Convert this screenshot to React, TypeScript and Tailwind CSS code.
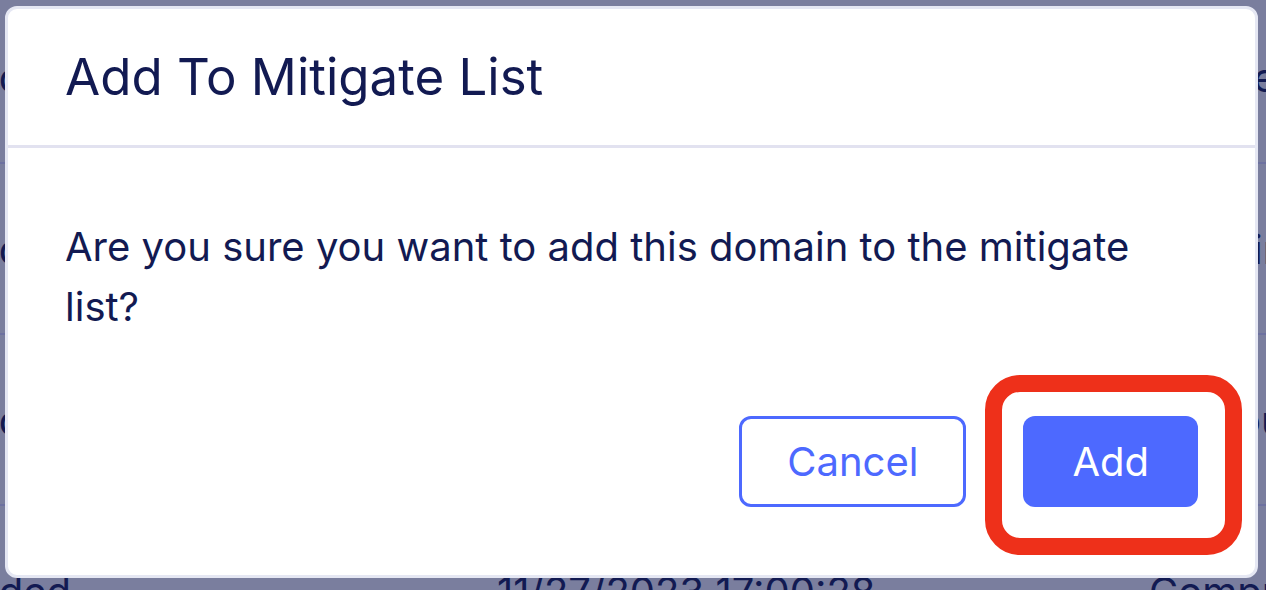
const rows = [
  { status: 'Added', date: '11/27/2023 17:00:28', type: 'e', pad: 'pl-[104px]' },
  { status: 'Added', date: '11/27/2023 17:00:28', type: 'in', pad: 'pl-[104px]' },
  { status: 'Added', date: '11/27/2023 17:00:28', type: 'ou', pad: 'pl-[88px]' },
  { status: 'Added', date: '11/27/2023 17:00:28', type: 'Compr', pad: 'pl-0' },
];

function DomainTable() {
  return (
    <table className="-mt-2 w-full table-fixed border-collapse text-[40px] whitespace-nowrap">
      <tbody>
        {rows.map((row, i) => (
          <tr key={i} className="h-[171px] border-b-2 border-[#6d71a0]">
            <td className="w-[497px] p-0 pt-0.5">
              <div className="flex w-[71px] justify-end">{row.status}</div>
            </td>
            <td className="p-0 pt-0.5">{row.date}</td>
            <td className="w-[117px] p-0 pt-0.5">
              <div className={row.pad}>{row.type}</div>
            </td>
          </tr>
        ))}
      </tbody>
    </table>
  );
}

export default function App() {
  return (
    <div className="relative h-screen overflow-hidden bg-[#7a7e9e] font-['Inter',sans-serif] text-[#121a52]">
      <DomainTable />
      <div className="absolute inset-0 flex items-start pt-1.5 pr-2 pl-[5px]">
        <div
          role="dialog"
          aria-modal="true"
          aria-labelledby="dialog-title"
          className="w-full rounded-xl border-[3px] border-[#e5e7f3] bg-white"
        >
          <header className="border-b-[3px] border-[#e2e2f0] px-[57px] py-[34px]">
            <h2 id="dialog-title" className="text-[51px] leading-[68px]">
              Add To Mitigate List
            </h2>
          </header>
          <div className="px-[57px] pt-[69px] pb-[68px]">
            <p className="text-[40px] leading-[60px]">
              Are you sure you want to add this domain to the mitigate list?
            </p>
            <div className="mt-[79px] flex justify-end gap-[57px] text-[40px] leading-[60px]">
              <button
                type="button"
                className="h-[91px] rounded-xl border-[3px] border-[#4d69ff] px-[45px] text-[#4d69ff]"
              >
                Cancel
              </button>
              <div className="relative">
                <button type="button" className="h-[91px] rounded-xl bg-[#4d69ff] px-[49px] text-white">
                  Add
                </button>
                <div className="pointer-events-none absolute -top-[41px] -right-[44px] -bottom-[48px] -left-[38px] rounded-[35px] border-[17px] border-[#ee301a]" />
              </div>
            </div>
          </div>
        </div>
      </div>
    </div>
  );
}
